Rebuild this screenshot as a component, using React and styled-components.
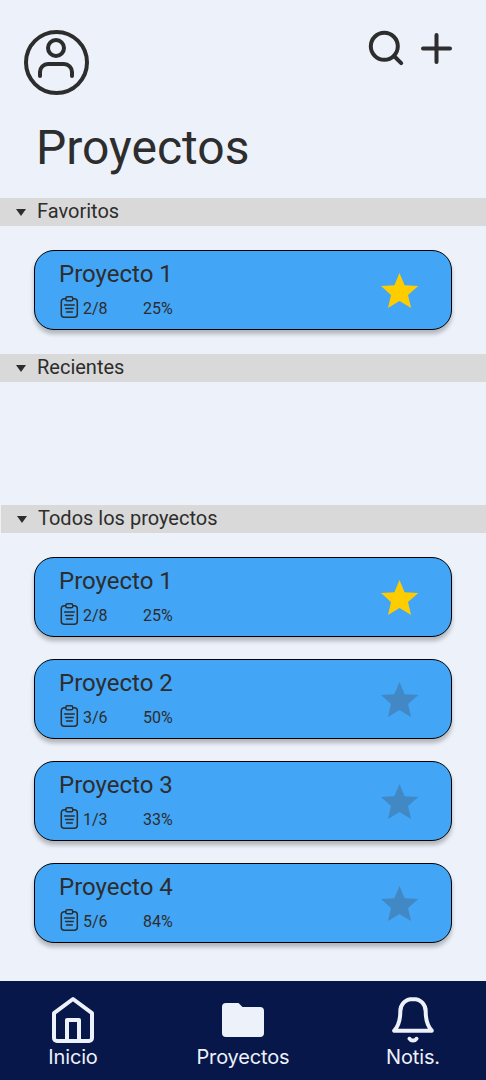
import React from "react";
import styled, { createGlobalStyle } from "styled-components";

const ink = "#2d2d2d";
const paper = "#ecf1fa";

const GlobalStyle = createGlobalStyle`
  * { box-sizing: border-box; }
  body { margin: 0; background: ${paper}; }
  svg { display: block; flex: none; }
`;

const Screen = styled.div`
  width: 486px;
  height: 1080px;
  display: flex;
  flex-direction: column;
  overflow: hidden;
  background: ${paper};
  color: ${ink};
  font-family: Roboto, sans-serif;
`;

const TopBar = styled.header`
  display: flex;
  justify-content: space-between;
  align-items: flex-start;
  height: 112px;
  padding: 28px 31px 0 22px;
`;

const Actions = styled.div`
  display: flex;
  gap: 10px;
`;

const Title = styled.h1`
  margin: 0;
  height: 86px;
  padding: 8px 0 0 36px;
  font-size: 48px;
  line-height: 56px;
  font-weight: 400;
`;

const SectionBar = styled.h2`
  display: flex;
  align-items: center;
  flex: none;
  gap: 11px;
  height: 28px;
  margin: 0 0 0 ${(p) => p.$inset || 0}px;
  padding: 0 0 3px 16px;
  background: #d9d9d9;
  font-size: 20px;
  line-height: 24px;
  font-weight: 400;
`;

const Arrow = styled.span`
  margin-top: 3px;
  border: 5px solid transparent;
  border-top: 7px solid ${ink};
  border-bottom: 0;
`;

const List = styled.div`
  display: flex;
  flex-direction: column;
  flex: none;
  gap: 22px;
  height: ${(p) => p.$height}px;
  padding: 24px 34px 0;
`;

const Card = styled.article`
  display: flex;
  justify-content: space-between;
  flex: none;
  height: 80px;
  padding: 8px 32px 0 24px;
  border: 1px solid #000;
  border-radius: 20px;
  background: #42a5f5;
  box-shadow: 0 4px 4px rgba(0, 0, 0, 0.25);
`;

const CardTitle = styled.h3`
  margin: 0;
  font-size: 24px;
  line-height: 30px;
  font-weight: 400;
`;

const Meta = styled.div`
  display: flex;
  align-items: flex-start;
  height: 24px;
  margin-top: 6px;
  font-size: 16px;
  line-height: 28px;
`;

const Count = styled.span`
  width: 60px;
  margin-left: 3px;
`;

const StarSlot = styled.div`
  padding-top: 14px;
`;

const Nav = styled.nav`
  display: flex;
  justify-content: space-between;
  flex: none;
  height: 99px;
  padding: 14px 13px 0;
  background: #08174a;
  color: ${paper};
  font-family: Inter, sans-serif;
`;

const NavItem = styled.a`
  display: flex;
  flex-direction: column;
  align-items: center;
  width: 120px;
  font-size: 20px;
  line-height: 24px;
  font-weight: 400;
  letter-spacing: -0.15px;
`;

const stroke = { fill: "none", stroke: "currentColor", strokeLinecap: "round", strokeLinejoin: "round" };

const Avatar = () => (
  <svg width="69" height="69" viewBox="22 28 69 69" {...stroke} strokeWidth="4">
    <circle cx="56.5" cy="62.5" r="30.5" />
    <circle cx="56" cy="48" r="8" />
    <path d="M40 76V72a8 8 0 0 1 8-8h16a8 8 0 0 1 8 8v4" />
  </svg>
);

const Search = () => (
  <svg width="40" height="40" viewBox="366 28 40 40" {...stroke} strokeWidth="4">
    <circle cx="384.3" cy="46.3" r="13.5" />
    <path d="M394 56l7.2 7.2" />
  </svg>
);

const Plus = () => (
  <svg width="39" height="40" viewBox="416 28 39 40" {...stroke} strokeWidth="4">
    <path d="M436.5 35v27M423 48.5h27" />
  </svg>
);

const Clipboard = () => (
  <svg width="21" height="24" viewBox="-0.3 -0.5 21 24" {...stroke} strokeWidth="1.5">
    <path d="M6.5 3.2H5a3 3 0 0 0-3 3v12.5a3 3 0 0 0 3 3h10a3 3 0 0 0 3-3v-12.5a3 3 0 0 0-3-3h-1.5" />
    <rect x="6.5" y="1.3" width="7" height="4" rx="1.6" />
    <path d="M5.3 9.4h9.6M6.3 13.1h7.6M7.2 16.6h5.8" />
  </svg>
);

const Star = ({ on }) => (
  <svg width="38" height="36" viewBox="0.3 0.3 38 36" fill={on ? "#ffcc00" : "#4188c5"}>
    <path d="M18.8 0.4L23.9 12.6L37.6 13.4L27.3 22.2L30.4 35.4L18.8 28.4L7.3 35.4L10.3 22.2L0.3 13.4L13.7 12.6Z" />
  </svg>
);

const Home = () => (
  <svg width="48" height="50" viewBox="49 995 48 50" {...stroke} strokeWidth="4">
    <path d="M54 1013.2L73 999l19 14.2V1038a3 3 0 0 1-3 3H57a3 3 0 0 1-3-3Z" />
    <path d="M67 1041V1020h12v21" />
  </svg>
);

const Folder = () => (
  <svg width="48" height="50" viewBox="219 995 48 50" fill="currentColor">
    <path d="M226 1003h12.5l4 4H260a4 4 0 0 1 4 4v22a4 4 0 0 1-4 4h-34a4 4 0 0 1-4-4v-26a4 4 0 0 1 4-4Z" />
  </svg>
);

const Bell = () => (
  <svg width="48" height="50" viewBox="389 995 48 50" {...stroke} strokeWidth="4">
    <path d="M413 999c-8 0-12.7 5.5-12.7 12.5 0 9-1.8 14.5-6.1 19.2h37.6c-4.3-4.7-6.1-10.2-6.1-19.2 0-7-4.7-12.5-12.7-12.5Z" />
    <path d="M409.5 1038.8c1.5 2.4 5.5 2.4 7 0" />
  </svg>
);

const projects = [
  { name: "Proyecto 1", count: "2/8", percent: "25%", favorite: true },
  { name: "Proyecto 2", count: "3/6", percent: "50%" },
  { name: "Proyecto 3", count: "1/3", percent: "33%" },
  { name: "Proyecto 4", count: "5/6", percent: "84%" },
];

const ProjectCard = ({ project }) => (
  <Card>
    <div>
      <CardTitle>{project.name}</CardTitle>
      <Meta>
        <Clipboard />
        <Count>{project.count}</Count>
        <span>{project.percent}</span>
      </Meta>
    </div>
    <StarSlot>
      <Star on={project.favorite} />
    </StarSlot>
  </Card>
);

const Section = ({ title, height, inset, items = [] }) => (
  <>
    <SectionBar $inset={inset}>
      <Arrow />
      {title}
    </SectionBar>
    <List $height={height}>
      {items.map((p) => (
        <ProjectCard key={p.name} project={p} />
      ))}
    </List>
  </>
);

export default function App() {
  return (
    <>
      <GlobalStyle />
      <Screen>
        <TopBar>
          <Avatar />
          <Actions>
            <Search />
            <Plus />
          </Actions>
        </TopBar>
        <Title>Proyectos</Title>
        <Section title="Favoritos" height={128} items={projects.filter((p) => p.favorite)} />
        <Section title="Recientes" height={123} />
        <Section title="Todos los proyectos" height={448} inset={1} items={projects} />
        <Nav>
          <NavItem><Home />Inicio</NavItem>
          <NavItem><Folder />Proyectos</NavItem>
          <NavItem><Bell />Notis.</NavItem>
        </Nav>
      </Screen>
    </>
  );
}
